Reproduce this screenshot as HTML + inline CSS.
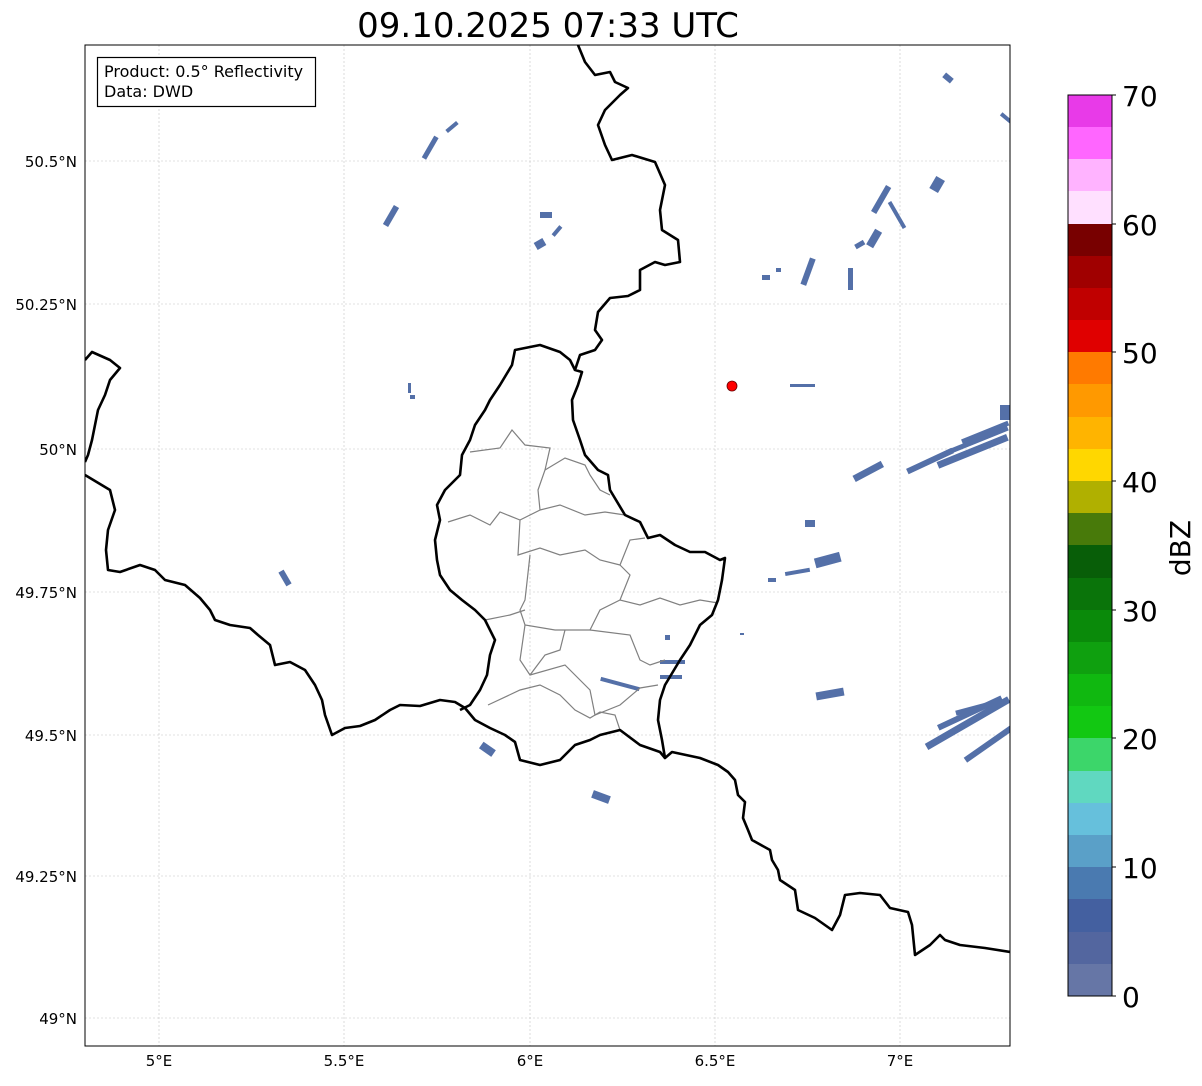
<!DOCTYPE html>
<html><head><meta charset="utf-8"><style>
body{margin:0;background:#fff;width:1202px;height:1081px;overflow:hidden;font-family:"Liberation Sans","DejaVu Sans",sans-serif}
</style></head><body>
<svg width="1202" height="1081" xmlns="http://www.w3.org/2000/svg" font-family="DejaVu Sans, Liberation Sans, sans-serif">
<defs><clipPath id="ax"><rect x="85" y="45" width="925" height="1001"/></clipPath></defs>
<text x="548" y="37" font-size="34" text-anchor="middle">09.10.2025 07:33 UTC</text>
<g stroke="#c4c4c4" stroke-width="0.6" stroke-dasharray="2,2">
<line x1="159" y1="45" x2="159" y2="1046"/><line x1="344" y1="45" x2="344" y2="1046"/><line x1="530" y1="45" x2="530" y2="1046"/><line x1="715" y1="45" x2="715" y2="1046"/><line x1="900" y1="45" x2="900" y2="1046"/>
<line x1="85" y1="161" x2="1010" y2="161"/><line x1="85" y1="304" x2="1010" y2="304"/><line x1="85" y1="449" x2="1010" y2="449"/><line x1="85" y1="592" x2="1010" y2="592"/><line x1="85" y1="735" x2="1010" y2="735"/><line x1="85" y1="876" x2="1010" y2="876"/><line x1="85" y1="1018" x2="1010" y2="1018"/>
</g>
<g clip-path="url(#ax)">
<g fill="#5470a8">
<rect x="428" y="135" width="5" height="25" transform="rotate(30 430 147)"/>
<rect x="450" y="120" width="4" height="14" transform="rotate(50 452 127)"/>
<rect x="388" y="205" width="6" height="22" transform="rotate(30 391 216)"/>
<rect x="540" y="212" width="12" height="6"/><rect x="535" y="240" width="10" height="8" transform="rotate(-30 540 244)"/><rect x="555" y="225" width="4" height="12" transform="rotate(40 557 231)"/>
<rect x="943" y="75" width="10" height="6" transform="rotate(40 948 78)"/>
<rect x="1000" y="115" width="14" height="4" transform="rotate(40 1005 117)"/>
<rect x="878" y="185" width="6" height="30" transform="rotate(30 882 200)"/><rect x="870" y="230" width="8" height="18" transform="rotate(30 875 239)"/><rect x="895" y="200" width="4" height="30" transform="rotate(-30 897 215)"/><rect x="932" y="178" width="10" height="14" transform="rotate(30 938 185)"/><rect x="855" y="242" width="10" height="5" transform="rotate(-30 860 245)"/>
<rect x="805" y="258" width="6" height="28" transform="rotate(20 809 272)"/><rect x="848" y="268" width="5" height="22"/><rect x="762" y="275" width="8" height="5"/><rect x="776" y="268" width="5" height="4"/>
<rect x="408" y="383" width="3" height="10"/><rect x="410" y="395" width="5" height="4"/>
<rect x="852" y="468" width="32" height="7" transform="rotate(-28 868 471)"/>
<rect x="905" y="458" width="50" height="6" transform="rotate(-25 930 461)"/>
<rect x="935" y="448" width="75" height="7" transform="rotate(-22 972 451)"/>
<rect x="945" y="438" width="65" height="5" transform="rotate(-22 977 440)"/>
<rect x="960" y="430" width="50" height="5" transform="rotate(-22 985 432)"/>
<rect x="1000" y="405" width="10" height="15"/>
<rect x="805" y="520" width="10" height="7"/><rect x="815" y="555" width="26" height="10" transform="rotate(-15 828 561)"/><rect x="785" y="570" width="25" height="4" transform="rotate(-10 797 572)"/><rect x="768" y="578" width="8" height="4"/>
<rect x="282" y="570" width="6" height="16" transform="rotate(-30 285 578)"/>
<rect x="600" y="682" width="40" height="4" transform="rotate(15 620 684)"/><rect x="665" y="635" width="5" height="5"/><rect x="660" y="660" width="25" height="4"/><rect x="660" y="675" width="22" height="4"/>
<rect x="816" y="690" width="28" height="8" transform="rotate(-10 830 694)"/>
<rect x="920" y="720" width="95" height="7" transform="rotate(-30 967 723)"/>
<rect x="935" y="710" width="70" height="6" transform="rotate(-25 970 713)"/>
<rect x="960" y="740" width="60" height="6" transform="rotate(-35 990 743)"/>
<rect x="955" y="705" width="45" height="5" transform="rotate(-15 977 707)"/>
<rect x="480" y="745" width="15" height="8" transform="rotate(35 487 749)"/>
<rect x="592" y="793" width="18" height="8" transform="rotate(20 601 797)"/>
<rect x="740" y="633" width="4" height="2"/><rect x="790" y="384" width="25" height="3"/>
</g>
<g fill="none" stroke="#808080" stroke-width="1.2">
<path d="M470 452 L500 448 L512 430 L525 445 L550 448 L545 470 L538 490 L540 510 L520 520 L500 512 L490 525 L470 515 L448 522"/>
<path d="M545 470 L565 458 L585 465 L590 475 L600 490 L610 495"/>
<path d="M520 520 L518 555 L540 548 L560 555 L585 550 L600 560 L620 565 L630 540 L645 538"/>
<path d="M540 510 L560 505 L585 515 L605 512 L625 515"/>
<path d="M530 555 L525 600 L520 610 L525 625 L555 630 L590 630 L600 610 L620 600 L640 605 L660 598 L680 605 L700 600 L718 603"/>
<path d="M620 565 L630 575 L620 600"/>
<path d="M485 620 L510 615 L525 610"/>
<path d="M525 625 L520 660 L530 675 L565 665 L590 690 L595 715 L620 705 L640 688 L658 685"/>
<path d="M565 630 L560 650 L545 655 L530 675"/>
<path d="M590 630 L630 635 L640 660 L650 665 L665 660"/>
<path d="M488 705 L520 690 L540 685 L560 695 L575 710 L590 718 L600 712 L615 715 L620 730"/>
</g>
<g fill="none" stroke="#000" stroke-width="2.6" stroke-linejoin="round">
<path d="M578 45 L585 62 L595 75 L610 72 L615 82 L628 88 L620 95 L605 110 L598 125 L605 145 L612 160 L632 155 L655 162 L665 185 L660 210 L662 230 L678 240 L680 262 L665 265 L655 262 L640 270 L640 290 L628 296 L610 298 L598 312 L595 330 L602 340 L595 350 L580 355 L575 370 L582 372 L578 385 L572 400 L573 420 L580 440 L585 455 L598 470 L608 475 L610 490 L625 515 L640 522 L648 538 L660 535 L675 545 L690 552 L705 552 L720 560 L725 558 L722 580 L718 600 L712 615 L700 625 L690 645 L680 660 L665 685 L660 700 L658 720 L662 740 L665 758 L672 752 L700 758 L718 765 L728 772 L735 780 L738 795 L745 802 L743 818 L748 830 L752 840 L770 850 L772 860 L778 870 L780 880 L795 890 L798 910 L815 918 L832 930 L840 915 L845 895 L860 893 L880 895 L890 908 L908 912 L912 925 L915 955 L930 945 L940 935 L945 940 L960 945 L985 948 L1010 952"/>
<path d="M575 370 L570 360 L560 352 L540 345 L515 350 L512 365 L500 385 L490 400 L485 410 L475 425 L470 440 L462 455 L460 475 L445 490 L437 505 L440 520 L435 540 L437 560 L440 575 L450 590 L462 600 L475 610 L485 620 L495 640 L490 655 L487 675 L480 690 L470 705 L460 710"/>
<path d="M85 475 L110 490 L115 510 L108 530 L106 550 L108 570 L120 572 L140 565 L155 570 L165 580 L185 585 L200 598 L210 610 L215 620 L230 625 L250 628 L258 635 L270 645 L275 665 L290 662 L305 670 L315 685 L322 700 L325 715 L332 735 L345 728 L360 726 L375 720 L390 710 L400 705 L420 706 L440 700 L455 702 L465 708 L475 720 L490 728 L505 735 L515 742 L520 760 L540 765 L560 760 L575 745 L590 740 L600 735 L620 730 L640 745 L660 752 L665 758"/>
<path d="M85 360 L92 352 L110 360 L120 368 L110 380 L105 395 L98 410 L95 425 L92 440 L88 455 L85 462"/>
</g>
</g>
<circle cx="732" cy="386" r="5" fill="#f00" stroke="#600" stroke-width="0.8"/>
<rect x="85" y="45" width="925" height="1001" fill="none" stroke="#000" stroke-width="1"/>
<rect x="97.5" y="57.5" width="218" height="49" fill="#fff" stroke="#000" stroke-width="1.2"/>
<text x="104" y="77" font-size="16">Product: 0.5° Reflectivity</text>
<text x="104" y="97" font-size="16">Data: DWD</text>
<g font-size="15" text-anchor="end">
<text x="77" y="167">50.5°N</text><text x="77" y="310">50.25°N</text><text x="77" y="455">50°N</text><text x="77" y="598">49.75°N</text><text x="77" y="741">49.5°N</text><text x="77" y="882">49.25°N</text><text x="77" y="1024">49°N</text>
</g>
<g font-size="15" text-anchor="middle">
<text x="159" y="1066">5°E</text><text x="344" y="1066">5.5°E</text><text x="530" y="1066">6°E</text><text x="715" y="1066">6.5°E</text><text x="900" y="1066">7°E</text>
</g>
<g shape-rendering="crispEdges">
<rect x="1068" y="95" width="44" height="34" fill="#e83ae8"/>
<rect x="1068" y="127" width="44" height="34" fill="#ff66ff"/>
<rect x="1068" y="159" width="44" height="34" fill="#ffb3ff"/>
<rect x="1068" y="191" width="44" height="34" fill="#ffe0ff"/>
<rect x="1068" y="224" width="44" height="34" fill="#780000"/>
<rect x="1068" y="256" width="44" height="34" fill="#a00000"/>
<rect x="1068" y="288" width="44" height="34" fill="#c00000"/>
<rect x="1068" y="320" width="44" height="34" fill="#e00000"/>
<rect x="1068" y="352" width="44" height="34" fill="#ff7a00"/>
<rect x="1068" y="384" width="44" height="34" fill="#ff9900"/>
<rect x="1068" y="417" width="44" height="34" fill="#ffb400"/>
<rect x="1068" y="449" width="44" height="34" fill="#ffd700"/>
<rect x="1068" y="481" width="44" height="34" fill="#b0b000"/>
<rect x="1068" y="513" width="44" height="34" fill="#487a0a"/>
<rect x="1068" y="545" width="44" height="34" fill="#085e08"/>
<rect x="1068" y="578" width="44" height="34" fill="#0a740a"/>
<rect x="1068" y="610" width="44" height="34" fill="#0a8a0a"/>
<rect x="1068" y="642" width="44" height="34" fill="#0fa00f"/>
<rect x="1068" y="674" width="44" height="34" fill="#10b810"/>
<rect x="1068" y="706" width="44" height="34" fill="#12c812"/>
<rect x="1068" y="738" width="44" height="34" fill="#3cd66a"/>
<rect x="1068" y="771" width="44" height="34" fill="#60d8c0"/>
<rect x="1068" y="803" width="44" height="34" fill="#66c0dc"/>
<rect x="1068" y="835" width="44" height="34" fill="#5aa0c8"/>
<rect x="1068" y="867" width="44" height="34" fill="#4a7ab0"/>
<rect x="1068" y="899" width="44" height="34" fill="#4460a0"/>
<rect x="1068" y="932" width="44" height="34" fill="#53669f"/>
<rect x="1068" y="964" width="44" height="32" fill="#6676a6"/>
<rect x="1068" y="95" width="44" height="901" fill="none" stroke="#000" stroke-width="1"/>
</g>
<g font-size="28">
<text x="1122" y="106">70</text><text x="1122" y="235">60</text><text x="1122" y="363">50</text><text x="1122" y="492">40</text><text x="1122" y="621">30</text><text x="1122" y="749">20</text><text x="1122" y="878">10</text><text x="1122" y="1007">0</text>
</g>
<g stroke="#000" stroke-width="1"><line x1="1112" y1="95" x2="1116" y2="95"/><line x1="1112" y1="224" x2="1116" y2="224"/><line x1="1112" y1="352" x2="1116" y2="352"/><line x1="1112" y1="481" x2="1116" y2="481"/><line x1="1112" y1="610" x2="1116" y2="610"/><line x1="1112" y1="738" x2="1116" y2="738"/><line x1="1112" y1="867" x2="1116" y2="867"/><line x1="1112" y1="996" x2="1116" y2="996"/></g>
<text x="1190" y="548" font-size="28" text-anchor="middle" transform="rotate(-90 1190 548)">dBZ</text>
</svg>
</body></html>
